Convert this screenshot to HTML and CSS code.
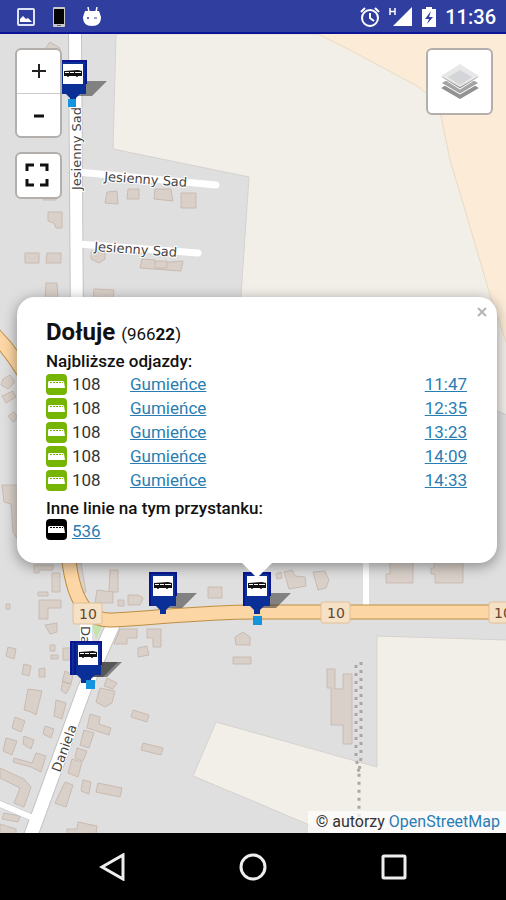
FILE: index.html
```html
<!DOCTYPE html>
<html lang="pl">
<head>
  <meta charset="utf-8">
  <meta name="viewport" content="width=device-width, initial-scale=1">
  <title>Dołuje - odjazdy</title>
  <link rel="stylesheet" href="styles.css">
</head>
<body>

  <!-- shared icons -->
  <svg class="defs" aria-hidden="true">
    <symbol id="bus" viewBox="0 0 21 21">
      <rect width="21" height="21" rx="4" fill="currentColor"/>
      <path d="M3 7h14l1 1 1 6H2V8z" fill="#fff"/>
      <path d="M4 8.500h13" stroke="currentColor" stroke-width="1" stroke-dasharray="2 1"/>
    </symbol>
    <symbol id="stop" viewBox="0 0 50 46" overflow="visible">
      <path d="M26 20h21l-15 15h-17z" fill="#333" opacity=".55"/>
      <path d="M0 0h26v33h-6l-4 4v4h-6v-4l-4-4H0z" fill="#0a2f96"/>
      <path d="M26 23v-23H0v33" fill="none" stroke="#0b1590" stroke-width="2"/>
      <path d="M3 3h20v20H3z" fill="#fff"/>
      <path d="M4 10l14-1 4 1v5H4z" fill="#111"/>
      <path d="M5 11h4v1H5zM10 11h4v1h-4zM15 11h6v1h-6z" fill="#fff"/>
      <circle cx="8" cy="15" r="1" fill="#111"/>
      <circle cx="17" cy="15" r="1" fill="#111"/>
    </symbol>
  </svg>

  <header id="status-bar">
    <div class="notifications">
      <svg width="18" height="18" viewBox="0 0 18 18"><rect x="1" y="1" width="16" height="16" rx="1" fill="none" stroke="#dfe3f8" stroke-width="2"/><path d="M3 14v-3l3-3 3 3 2-1 4 4z" fill="#fff"/></svg>
      <svg width="12" height="20" viewBox="0 0 12 20"><rect width="12" height="20" rx="1" fill="#c9c9c9"/><rect x="1" y="2" width="10" height="15" fill="#050505"/><path d="M4 18.500h4" stroke="#666"/></svg>
      <svg width="18" height="20" viewBox="0 0 18 20"><path d="M5 0l1 5M14 0l-1 5" stroke="#fff" stroke-width="1.500"/><path d="M2 4h14l2 6c0 6-3 9-9 9s-9-3-9-9z" fill="#fff"/><circle cx="5" cy="11" r="1" fill="#303f9f"/><path d="M11 11h3" stroke="#303f9f"/></svg>
    </div>
    <div class="system">
      <svg width="20" height="20" viewBox="0 0 20 20" fill="none" stroke="#fff" stroke-width="2"><circle cx="10" cy="11" r="8"/><path d="M10 6v5l4 3M1 5l4-4M19 5l-4-4"/></svg>
      <svg width="24" height="20" viewBox="0 0 24 20"><path d="M1 1v7M6 1v7M1 4.500h5" stroke="#fff" stroke-width="1.500"/><path d="M23 0v19H4z" fill="#fff"/></svg>
      <svg width="14" height="20" viewBox="0 0 14 20"><path d="M0 2h4V0h6v2h4v18H0z" fill="#fff"/><path d="M9 4l-6 8h4l-2 5 6-7H7z" fill="#303f9f"/></svg>
      <time>11:36</time>
    </div>
  </header>

  <main id="map">
    <svg class="tiles" viewBox="0 34 506 799" preserveAspectRatio="xMidYMid slice">
      <rect y="34" width="506" height="799" fill="#e0dfe0"/>

      <!-- fields -->
      <g stroke="#d5d2cf">
        <path d="M116 34L113 149L249 177L240 310L520 420V34z" fill="#f2efe9"/>
        <path d="M316 33L350 50L417 86L430 96L441 116L450 160L468 220L490 295L507 345V33z" fill="#fbebd7" stroke="#e8dcc2"/>
        <path d="M377 636L507 640V834H332L314 827L253 801L193 776L216 722L377 767z" fill="#f2efe9"/>
      </g>
      <path d="M92 625h11l-7 14z" fill="#c5e3ad"/>

      <!-- buildings -->
      <g class="buildings">
        <path d="M45 49l5-7 10 6v4H45z"/>
        <path d="M107 192l10-1 1 13-13-1z"/>
        <path d="M128 189h11v10h-12z"/>
        <path d="M155 189h16l2 12-19-2z"/>
        <path d="M181 193h15v15h-15z"/>
        <path d="M48 212h14v16h-6l-2-5-6-2z"/>
        <path d="M43 196h13v4H43z"/>
        <path d="M25 253h14v10H25z"/>
        <path d="M47 253h14v10H46z"/>
        <path d="M46 283h11l1 16H45z"/>
        <path d="M91 252h14v7l-6 4-8-4z"/>
        <path d="M142 259l13 1v3l28-2-2 10-41-3z"/>
        <path d="M155 261h12v7h-12z"/>
        <path d="M94 289l20 1-1 10H93z"/>
        <path d="M3 379l7-4 5 7-7 7-7-4zM2 396l11-5 3 6-10 6zM8 416l6-4 4 6-5 4z"/>
        <path d="M2 485h16v55l-5-8-2-28-7-2z"/>
        <path d="M34 565h19v5H39v3h-5zM52 573h8v19h-8z"/>
        <path d="M77 563h4l5 29-4 2-7-22z"/>
        <path d="M110 570h8v22h-9z"/>
        <path d="M97 590l16 2v11H95z"/>
        <path d="M118 600h6v6h-6z"/>
        <path d="M128 595h10l5 3-3 7h-12z"/>
        <path d="M38 592h10v4H38zM39 600h22v8H48v11h-9z"/>
        <path d="M6 604h4v5H6zM45 625l12-2v9l-7 2z"/>
        <path d="M120 629h17v9h-10v6h-13z"/>
        <path d="M147 629h14v18h-8v-9h-6z"/>
        <path d="M138 648l9-2 2 9-11 2z"/>
        <path d="M208 587h14v11h-14z"/>
        <path d="M235 637l8-5 7 5v8h-14zM233 657h18v7h-18z"/>
        <path d="M8 647l8 2-2 10-8-3zM50 645h5v6h-5zM51 655h7v4h-7zM63 648h8v12h-8z"/>
        <path d="M24 664l7 2-2 10-7-2zM39 669l6-1v9h-6z"/>
        <path d="M28 689l14 2-6 24-5-3-7-2z"/>
        <path d="M65 671l8 4-2 9-9-2zM63 681l8 3-5 10-5-4zM107 678l10 5-4 6-9-3z"/>
        <path d="M100 688l15 3-3 12-7 4-9-5z"/>
        <path d="M56 700l10 3-4 16-8-3z"/>
        <path d="M15 717l10 4-4 11-9-4zM6 738l11 3-5 14-9-4zM24 736l10 4-3 9-8-5zM45 726l9 3-3 9-8-4z"/>
        <path d="M36 753l10 3-5 16-10-5-18-5 1-4 18 5z"/>
        <path d="M0 768l24 11 7 8-7 20-10-4 6-15-20-10z"/>
        <path d="M90 714l10 3-1 7 12 4-2 7-22-7z"/>
        <path d="M84 730l10 3-5 15-9-3zM77 748l10 3-4 10-8-3zM72 759l10 3-4 15-10-4z"/>
        <path d="M65 782l8 3-7 22-11-4zM83 780l8 2-2 12-8-3z"/>
        <path d="M98 783l24 5-2 9-24-5z"/>
        <path d="M133 710l16 5-2 7-16-5zM143 743l20 5-2 7-20-5z"/>
        <path d="M78 822l19 4-1 8H67v-5h10zM0 824l16 5v5H0zM4 813l16 3-2 6-16-3z"/>
        <path d="M276 574l5-2 1 6-5 1zM284 572l8-2 3 6 10 1 1 9-17 3z"/>
        <path d="M313 572l12-1 4 9-3 8-8 2z"/>
        <path d="M390 561h23v22h-27v-9h4zM434 561h29v22h-28v-9h-4v-6h3z"/>
        <path d="M327 669h8v20h8v-15h9v70h-9v-19h-12v-37h-4z"/>
      </g>

      <!-- minor roads -->
      <g class="minor casing">
        <path d="M75 30L77 330" stroke-width="14"/>
        <path d="M28 843L84 690L113 625" stroke-width="15"/>
        <path d="M0 804L33 818" stroke-width="7"/>
      </g>
      <g class="minor">
        <path d="M75 30L77 330" stroke-width="12"/>
        <path d="M28 843L84 690L113 625" stroke-width="13"/>
        <path d="M0 804L33 818" stroke-width="6"/>
        <path d="M78 172L216 185M78 244L198 253" stroke-width="7"/>
        <path d="M366 555V608" stroke-width="6"/>
        <path d="M86 622V660" stroke-width="12"/>
      </g>

      <!-- road 10 -->
      <path d="M-6 334C20 360 54 415 62 480C69 540 62 622 112 620C160 618 195 612 260 612H510" fill="none" stroke="#bd8e42" stroke-width="15"/>
      <path d="M-6 334C20 360 54 415 62 480C69 540 62 622 112 620C160 618 195 612 260 612H510" fill="none" stroke="#fcd6a4" stroke-width="13"/>

      <path d="M361 662V758L359 772V830" class="trees"/>
      <path d="M356 665V758L359 772" class="trees"/>

      <g class="shields">
        <rect x="73" y="603" width="29" height="21" rx="2"/>
        <rect x="321" y="602" width="29" height="21" rx="2"/>
        <rect x="489" y="602" width="29" height="21" rx="2"/>
        <text x="88" y="619">10</text>
        <text x="336" y="618">10</text>
        <text x="503" y="618">10</text>
      </g>

      <g class="street-names">
        <text transform="translate(104 181) rotate(4)">Jesienny Sad</text>
        <text transform="translate(94 251) rotate(4)">Jesienny Sad</text>
        <text transform="translate(81 190) rotate(-90)">Jesienny Sad</text>
        <text transform="translate(60 773) rotate(-70)">Daniela</text>
        <text transform="translate(81 626) rotate(90)">Da</text>
      </g>

      <!-- stops -->
      <use href="#stop" x="60" y="61" width="50" height="46"/>
      <use href="#stop" x="150" y="573" width="50" height="46"/>
      <use href="#stop" x="244" y="573" width="50" height="46"/>
      <use href="#stop" x="71" y="642" width="50" height="46"/>
      <use href="#stop" x="75" y="642" width="50" height="46"/>
      <path d="M68 99h8v8h-8zM253 616h9v9h-9zM86 680h9v9h-9z" fill="#1593dd"/>
    </svg>

    <div class="controls left">
      <div class="bar">
        <button aria-label="Przybliż"><svg width="16" height="16" viewBox="0 0 16 16"><path d="M1 7h14M8 0v14" stroke="#222" stroke-width="2"/></svg></button>
        <button aria-label="Oddal"><svg width="16" height="16" viewBox="0 0 16 16"><path d="M3 9h10" stroke="#111" stroke-width="3"/></svg></button>
      </div>
      <div class="bar">
        <button class="fullscreen" aria-label="Pełny ekran"><svg width="28" height="28" viewBox="0 0 28 28"><path d="M2 9V3h7M15 3h7v6M22 17v6h-7M9 23H2v-6" fill="none" stroke="#111" stroke-width="3"/></svg></button>
      </div>
    </div>

    <div class="controls right">
      <div class="bar">
        <button class="layers" aria-label="Warstwy">
          <svg width="38" height="36" viewBox="0 0 38 36">
            <path d="M0 24l19-11 19 11-19 11z" fill="#929292"/>
            <path d="M0 19l19-11 19 11-19 11z" fill="#a5a5a5" stroke="#fff"/>
            <path d="M0 13l19-12 19 12-19 12z" fill="#999" stroke="#fff"/>
            <path d="M0 12l19-12 19 12-19 11z" fill="#e8e8e8"/>
            <path d="M7 13l12-7 12 7-12 8z" fill="#d3d5d8"/>
          </svg>
        </button>
      </div>
    </div>

    <section id="popup">
      <button class="close" aria-label="Zamknij"><svg width="10" height="10" viewBox="0 0 10 10"><path d="M1 1l8 8M9 1L1 9" stroke="#b5b5b5" stroke-width="2"/></svg></button>
      <h1>Dołuje <small>(966<b>22</b>)</small></h1>
      <h2>Najbliższe odjazdy:</h2>
      <table>
        <tr><td class="icon"><svg><use href="#bus"/></svg></td><td class="line">108</td><td><a href="#">Gumieńce</a></td><td class="time"><a href="#">11:47</a></td></tr>
        <tr><td class="icon"><svg><use href="#bus"/></svg></td><td class="line">108</td><td><a href="#">Gumieńce</a></td><td class="time"><a href="#">12:35</a></td></tr>
        <tr><td class="icon"><svg><use href="#bus"/></svg></td><td class="line">108</td><td><a href="#">Gumieńce</a></td><td class="time"><a href="#">13:23</a></td></tr>
        <tr><td class="icon"><svg><use href="#bus"/></svg></td><td class="line">108</td><td><a href="#">Gumieńce</a></td><td class="time"><a href="#">14:09</a></td></tr>
        <tr><td class="icon"><svg><use href="#bus"/></svg></td><td class="line">108</td><td><a href="#">Gumieńce</a></td><td class="time"><a href="#">14:33</a></td></tr>
      </table>
      <h2>Inne linie na tym przystanku:</h2>
      <div class="other"><svg><use href="#bus"/></svg><a href="#">536</a></div>
    </section>

    <div id="attribution">© autorzy <a href="#">OpenStreetMap</a></div>
  </main>

  <nav id="nav-bar">
    <button aria-label="Wstecz"><svg width="28" height="28" viewBox="0 0 28 28"><path d="M24 2v24L3 14z"/></svg></button>
    <button aria-label="Ekran główny"><svg width="28" height="28" viewBox="0 0 28 28"><circle cx="14" cy="14" r="12"/></svg></button>
    <button aria-label="Ostatnie"><svg width="28" height="28" viewBox="0 0 28 28"><rect x="4" y="3" width="22" height="22" rx="1"/></svg></button>
  </nav>

</body>
</html>
```

FILE: styles.css
```css
html, body {
  height: 100%;
  margin: 0;
}
body {
  display: flex;
  flex-direction: column;
  font-family: Roboto, sans-serif;
  font-size: 17px;
  color: #333;
}
svg {
  display: block;
}
button {
  display: flex;
  align-items: center;
  justify-content: center;
  margin: 0;
  padding: 0;
  border: none;
  background: none;
}
a {
  color: #2a7db3;
}
.defs {
  position: absolute;
  width: 0;
  height: 0;
}

#status-bar {
  display: flex;
  justify-content: space-between;
  align-items: center;
  box-sizing: border-box;
  height: 34px;
  padding: 2px 10px 0 17px;
  background: #303f9f;
  border-bottom: 2px solid #0b1397;
  color: #fff;
}
.notifications, .system {
  display: flex;
  align-items: center;
}
.notifications {
  gap: 18px;
}
.system {
  gap: 9px;
}
.system time {
  font-size: 20px;
  font-weight: 500;
  line-height: 24px;
}

#map {
  position: relative;
  flex: 1;
  overflow: hidden;
}
.tiles {
  position: absolute;
  width: 100%;
  height: 100%;
}
.buildings {
  fill: #d9d0c9;
  stroke: #c8bbb1;
}
.minor {
  fill: none;
  stroke: #fff;
  stroke-linecap: round;
}
.minor.casing {
  stroke: #c4c2c3;
}
.trees {
  fill: none;
  stroke: #aaa6a5;
  stroke-width: 3;
  stroke-dasharray: 3 5;
}
.shields rect {
  fill: #f7e1c6;
  stroke: #dfc096;
}
.shields text {
  font: 14px "DejaVu Sans", sans-serif;
  fill: #5f4930;
  text-anchor: middle;
}
.street-names text {
  font: 13px "DejaVu Sans", sans-serif;
  fill: #444;
  stroke: #fff;
  stroke-width: 2px;
  paint-order: stroke;
}

.controls {
  position: absolute;
  top: 14px;
  display: flex;
  flex-direction: column;
  gap: 14px;
}
.controls.left {
  left: 15px;
}
.controls.right {
  right: 13px;
}
.bar {
  border: 2px solid #b3afac;
  border-radius: 6px;
  background: #fff;
  overflow: hidden;
}
.bar button {
  width: 43px;
  height: 43px;
}
.bar button + button {
  border-top: 1px solid #ccc;
}
.bar .layers {
  width: 63px;
  height: 63px;
}

#popup {
  position: absolute;
  top: 263px;
  left: 17px;
  right: 9px;
  padding: 19px 30px 20px 29px;
  border-radius: 18px;
  background: #fff;
  box-shadow: 0 3px 14px rgba(0, 0, 0, 0.4);
}
#popup::after {
  content: "";
  position: absolute;
  top: 100%;
  left: 50%;
  margin-left: -15px;
  border: 15px solid transparent;
  border-top-color: #fff;
  border-bottom: none;
}
#popup .close {
  position: absolute;
  top: 5px;
  right: 5px;
  width: 20px;
  height: 20px;
}
#popup h1 {
  margin: 0;
  font-size: 24px;
  font-weight: 700;
  line-height: 32px;
  color: #111;
}
#popup h1 small {
  font-size: 17px;
  font-weight: 400;
}
#popup h2 {
  margin: 0;
  font-size: 17px;
  font-weight: 500;
  line-height: 22px;
  color: #111;
}
#popup table {
  width: 100%;
  margin-bottom: 5px;
  border-collapse: collapse;
}
#popup td {
  height: 24px;
  padding: 0;
  line-height: 24px;
}
#popup .icon {
  width: 26px;
  color: #76b405;
}
#popup .line {
  width: 58px;
}
#popup .time {
  text-align: right;
}
.icon svg, .other svg {
  width: 21px;
  height: 21px;
}
.other {
  display: flex;
  gap: 5px;
  line-height: 24px;
  color: #000;
}

#attribution {
  position: absolute;
  right: 0;
  bottom: 0;
  padding: 0 6px 0 8px;
  background: rgba(255, 255, 255, 0.7);
  font-size: 16px;
  line-height: 22px;
}
#attribution a {
  text-decoration: none;
}

#nav-bar {
  display: flex;
  justify-content: center;
  align-items: center;
  gap: 112px;
  height: 67px;
  background: #000;
}
#nav-bar svg {
  fill: none;
  stroke: #eee;
  stroke-width: 3;
}
```
